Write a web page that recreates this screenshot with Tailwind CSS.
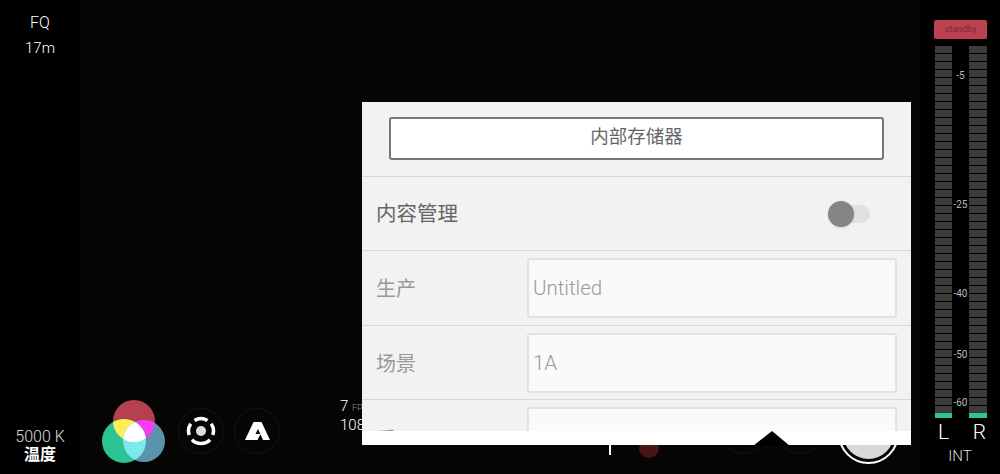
<!DOCTYPE html>
<html lang="en">
  <head>
    <meta charset="UTF-8" />
    <title>Camera</title>
    <script src="https://cdn.jsdelivr.net/npm/@tailwindcss/browser@4"></script>
  </head>
  <body class="bg-black overflow-hidden">
    <div class="relative flex w-[1000px] h-[474px] bg-black text-white font-['Roboto','Noto_Sans_CJK_SC',sans-serif]">
      <!-- left column -->
      <div class="w-[80px] h-full flex flex-col justify-between items-center pt-[14px] pb-[10px]">
        <div class="flex flex-col items-center">
          <span class="text-[16px] leading-[18px] font-light">FQ</span>
          <span class="text-[15px] leading-[18px] mt-[7px] font-light">17m</span>
        </div>
        <div class="flex flex-col items-center">
          <span class="text-[16px] leading-[18px] font-light text-[#ddd]">5000 K</span>
          <span class="text-[16px] leading-[18px] font-bold">温度</span>
        </div>
      </div>

      <!-- middle -->
      <div class="flex-1 h-full bg-[#050505] flex items-end pb-[9px] pl-[21px]">
        <svg width="66" height="66" viewBox="0 0 66 66">
          <defs>
            <clipPath id="cr"><circle cx="33" cy="22" r="21" /></clipPath>
            <clipPath id="cg"><circle cx="23" cy="42" r="22" /></clipPath>
            <clipPath id="cb"><circle cx="43" cy="42" r="21" /></clipPath>
          </defs>
          <circle cx="33" cy="22" r="21" fill="#b5404f" />
          <circle cx="23" cy="42" r="22" fill="#2cc495" />
          <circle cx="43" cy="42" r="21" fill="#5b93ad" />
          <circle cx="23" cy="42" r="22" fill="#ffee55" clip-path="url(#cr)" />
          <circle cx="43" cy="42" r="21" fill="#f83cf0" clip-path="url(#cr)" />
          <circle cx="43" cy="42" r="21" fill="#7fe8ec" clip-path="url(#cg)" />
          <g clip-path="url(#cr)"><circle cx="23" cy="42" r="22" fill="#fff" clip-path="url(#cb)" /></g>
        </svg>
        <div class="ml-[11px] mb-[11px] w-[46px] h-[46px] rounded-full border border-[#141414] flex items-center justify-center">
          <svg width="30" height="30" viewBox="0 0 30 30" fill="none" stroke="#fff" stroke-width="3.5">
            <circle cx="15" cy="15" r="5" fill="#ddd" stroke="none" />
            <path d="M8.5 4.4 A12.5 12.5 0 0 1 21.5 4.4" />
            <path d="M4.8 7.8 A12.5 12.5 0 0 0 3.2 19" />
            <path d="M25.2 7.8 A12.5 12.5 0 0 1 26.8 19" />
            <path d="M6 23.7 A12.5 12.5 0 0 0 24 23.7" />
          </svg>
        </div>
        <div class="ml-[10px] mb-[11px] w-[46px] h-[46px] rounded-full border border-[#141414] flex items-center justify-center">
          <svg width="25" height="18" viewBox="0 0 25 18" fill="#fff">
            <path d="M8.5 0 H16.5 L25 18 H18 L13 7 L10.5 12 H15.5 L12.5 18 H0 Z" />
          </svg>
        </div>
        <div class="ml-[60px] mb-[31px] flex flex-col text-[15px] leading-[17px] font-light">
          <span>7 <span class="text-[9px] text-[#888]">FPS</span></span>
          <span>108</span>
        </div>
      </div>

      <!-- audio meters -->
      <div class="w-[80px] h-full flex flex-col items-start pl-[14px] pt-[20px]">
        <div class="w-[53px] h-[19px] rounded-[2px] bg-[#bd4150] flex items-center justify-center text-[9px] text-[#7a2a35]">standby</div>
        <div class="relative mt-[7px] flex justify-between w-[53px]">
          <div class="w-[17px] ml-px flex flex-col">
            <div id="meterL" class="flex flex-col gap-px"></div>
            <div class="h-[5px] bg-[#2cc495]"></div>
          </div>
          <div class="w-[18px] flex flex-col">
            <div id="meterR" class="flex flex-col gap-px"></div>
            <div class="h-[5px] bg-[#2cc495]"></div>
          </div>
          <span class="absolute left-0 right-0 text-center text-[10px] leading-[10px] text-[#bbb] top-[25px]">-5</span>
          <span class="absolute left-0 right-0 text-center text-[10px] leading-[10px] text-[#bbb] top-[154px]">-25</span>
          <span class="absolute left-0 right-0 text-center text-[10px] leading-[10px] text-[#bbb] top-[243px]">-40</span>
          <span class="absolute left-0 right-0 text-center text-[10px] leading-[10px] text-[#bbb] top-[304px]">-50</span>
          <span class="absolute left-0 right-0 text-center text-[10px] leading-[10px] text-[#bbb] top-[352px]">-60</span>
        </div>
        <div class="flex justify-between w-[52px] pl-[4px] text-[21px] leading-[24px] font-light mt-[2px]">
          <span>L</span>
          <span>R</span>
        </div>
        <span class="self-center ml-[-14px] text-[15px] leading-[18px] font-light text-[#ddd] mt-[3px]">INT</span>
      </div>

      <!-- stuff under the popover -->
      <div class="absolute left-[609px] top-[440px] w-[2px] h-[15px] bg-white"></div>
      <div class="absolute left-[639px] top-[438px] w-[20px] h-[20px] rounded-full bg-[#4a1515]"></div>
      <div class="absolute left-[720px] top-[408px] w-[46px] h-[46px] rounded-full border border-[#141414]"></div>
      <div class="absolute left-[777px] top-[408px] w-[46px] h-[46px] rounded-full border border-[#141414]"></div>
      <div class="absolute left-[838px] top-[403px] w-[61px] h-[61px] rounded-full border-2 border-white p-[3px]">
        <div class="w-full h-full rounded-full bg-[#d8d8d8]"></div>
      </div>

      <!-- popover -->
      <div class="absolute left-[362px] top-[102px] w-[549px] h-[343px] bg-white">
        <div class="h-[329px] overflow-hidden bg-[#f2f2f2] text-[#666]">
          <div class="h-[75px] pt-[15px] px-[27px] border-b border-[#d8d8d8]">
            <div class="h-[43px] pb-[2px] bg-white rounded-[3px] border-2 border-[#777] flex items-center justify-center text-[18.5px]">内部存储器</div>
          </div>
          <div class="h-[74px] pl-[14px] pr-[41px] flex items-center justify-between border-b border-[#d8d8d8]">
            <span class="text-[20.5px] mt-[2px]">内容管理</span>
            <div class="relative w-[42px] h-[18px] rounded-full bg-[#e0e0e0] ml-auto">
              <div class="absolute left-0 top-[-4px] w-[26px] h-[26px] rounded-full bg-[#858585] shadow"></div>
            </div>
          </div>
          <div class="h-[75px] px-[14px] flex items-center border-b border-[#d8d8d8]">
            <span class="w-[151px] text-[20px] text-[#999] mt-[2px]">生产</span>
            <div class="flex-1 h-[60px] bg-[#fafafa] border-2 border-[#e2e2e2] rounded-[2px] flex items-center px-[4px] text-[20.5px] font-light text-[#999]">Untitled</div>
          </div>
          <div class="h-[74px] px-[14px] flex items-center border-b border-[#d8d8d8]">
            <span class="w-[151px] text-[20px] text-[#999] mt-[2px]">场景</span>
            <div class="flex-1 h-[60px] bg-[#fafafa] border-2 border-[#e2e2e2] rounded-[2px] flex items-center px-[4px] pt-[1px] text-[20.5px] font-light text-[#999]">1A</div>
          </div>
          <div class="h-[74px] px-[14px] flex items-center">
            <span class="w-[151px] text-[20px] text-[#999] mt-[5px]">采用</span>
            <div class="flex-1 h-[60px] bg-[#fafafa] border-2 border-[#e2e2e2] rounded-[2px] flex items-center px-[4px] pt-[6px] text-[20.5px] font-light text-[#999]">1</div>
          </div>
        </div>
      </div>
      <!-- popover arrow -->
      <svg class="absolute left-[752px] top-[430px]" width="40" height="16" viewBox="0 0 40 16">
        <path d="M1 16 L20 1 L38 16 Z" fill="#000" />
      </svg>
    </div>

    <script>
      // meter segments
      ["meterL", "meterR"].forEach((id) => {
        const el = document.getElementById(id);
        for (let i = 0; i < 46; i++) {
          const seg = document.createElement("div");
          seg.style.height = "7px";
          seg.style.background = "#3c3c3c";
          el.appendChild(seg);
        }
      });
    </script>
  </body>
</html>
